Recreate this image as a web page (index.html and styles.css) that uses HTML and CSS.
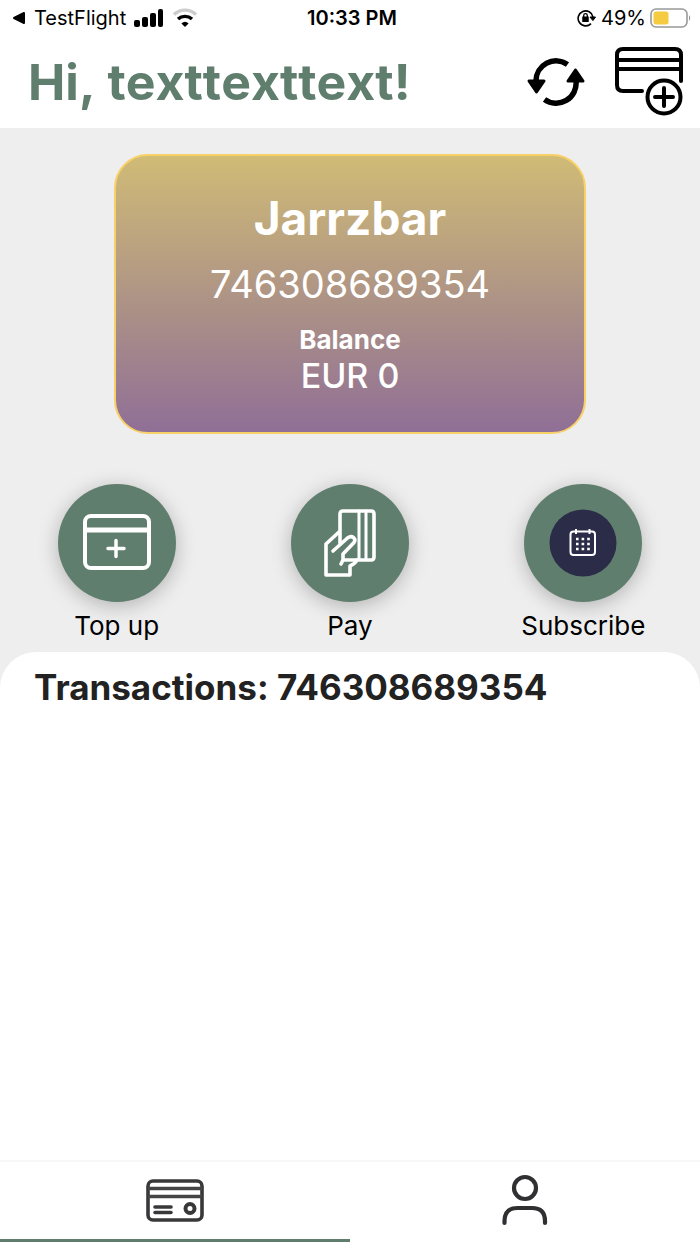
FILE: index.html
```
<!DOCTYPE html>
<html lang="en">
<head>
    <meta charset="utf-8">
    <meta name="viewport" content="width=device-width, initial-scale=1">
    <link rel="stylesheet" href="styles.css">
    <title>Wallet</title>
</head>
<body>
    <div class="status">
        <div class="status-left">
            <svg width="14" height="14" viewBox="0 0 14 14"><path d="M12 2v10L2 7z" stroke="#000" stroke-width="2" stroke-linejoin="round"/></svg>
            <span class="carrier">TestFlight</span>
            <svg width="30" height="20" viewBox="0 0 30 20"><rect x="0" y="12" width="6" height="7" rx="2"/><rect x="8" y="9" width="6" height="10" rx="2"/><rect x="16" y="5" width="6" height="14" rx="2"/><rect x="24" y="1" width="5" height="18" rx="2"/></svg>
            <svg width="26" height="20" viewBox="0 0 26 20" fill="none" stroke-width="3.4"><path d="M2 6.500a16 16 0 0 1 22 0" stroke="#ccc"/><path d="M6 11a10.500 10.500 0 0 1 14 0" stroke="#000"/><path d="M13 19l-3.600-3.600a5.500 5.500 0 0 1 7.200 0z" fill="#000"/></svg>
        </div>
        <div class="time">10:33 PM</div>
        <div class="status-right">
            <svg width="20" height="18" viewBox="0 0 20 18" fill="none" stroke="#000" stroke-width="1.6"><path d="M14 14.600A7.500 7.500 0 1 1 16 8"/><path d="M13 8h5.500l-2.600 3.600z" fill="#000" stroke-width="1"/><rect x="5.800" y="8" width="5.400" height="4.500" fill="#000" stroke-width="1"/><path d="M6.700 8V6.500a1.800 1.800 0 0 1 3.600 0V8" stroke-width="1.3"/></svg>
            <span>49%</span>
            <svg width="42" height="20" viewBox="0 0 42 20"><rect x="1" y="1" width="36" height="18" rx="5" fill="#fff" stroke="#999" stroke-width="1.6"/><rect x="3.500" y="3.500" width="15" height="13" rx="2.500" fill="#f5cb42"/><path d="M39 7q2.500 3 0 6z" fill="#999"/></svg>
        </div>
    </div>
    <header class="header">
        <h1>Hi, texttexttext!</h1>
        <div class="tools">
            <button class="icon-button" aria-label="Refresh">
                <svg width="60" height="48" viewBox="0 0 60 48"><g fill="none" stroke="#000" stroke-width="5.5"><path d="M41.500 6.500A20 20 0 0 0 10 23"/><path d="M18.500 41.500A20 20 0 0 0 50 23"/></g><g stroke="#000" stroke-width="3" stroke-linejoin="round"><path d="M3 23h15l-7.500 11z"/><path d="M42 23h15L49.500 12z"/></g></svg>
            </button>
            <button class="icon-button" aria-label="Add card">
                <svg width="70" height="70" viewBox="0 0 70 70" fill="none" stroke="#000" stroke-width="4" stroke-linecap="round"><path d="M28 44H9q-6 0-6-6V8q0-6 6-6h52q6 0 6 6v26"/><path d="M4 13h62M4 22h62"/><circle cx="50" cy="50" r="16.500"/><path d="M41 50h18M50 41v18"/></svg>
            </button>
        </div>
    </header>
    <main class="main">
        <section class="overview">
            <div class="card">
                <h2>Jarrzbar</h2>
                <div class="number">746308689354</div>
                <div class="label">Balance</div>
                <div class="balance">EUR 0</div>
            </div>
            <div class="actions">
                <button class="action">
                    <span class="circle">
                        <svg width="68" height="68" viewBox="0 0 68 68" fill="none" stroke="#fff" stroke-width="4" stroke-linecap="round"><rect x="2" y="7" width="64" height="52" rx="6"/><path d="M3 21h62" stroke-width="5"/><path d="M25 39.500h16M33 31.500v16" stroke-width="3.5"/></svg>
                    </span>
                    <span>Top up</span>
                </button>
                <button class="action">
                    <span class="circle">
                        <svg width="68" height="68" viewBox="0 0 68 68" fill="none" stroke="#fff" stroke-width="3.6" stroke-linecap="round" stroke-linejoin="round"><path d="M24 34V5q0-3 3-3h28q3 0 3 3v43q0 3-3 3H28"/><path d="M43 2v48M50 2v48" stroke-width="3"/><path d="M23 23L10 35v31h24v-9q5-2 7-6"/><path d="M17 42l14.500-13c5-3.500 9 1 6.500 4.500L27 45v6l-2 4"/></svg>
                    </span>
                    <span>Pay</span>
                </button>
                <button class="action">
                    <span class="circle">
                        <svg width="68" height="68" viewBox="0 0 68 68" fill="none" stroke="#fff" stroke-width="2"><circle cx="34" cy="34" r="33.500" fill="#2b2c48" stroke="none"/><rect x="21.500" y="22.500" width="24.500" height="23.500" rx="3"/><path d="M27 20v5M40.500 20v5"/><path d="M27 30h15M27 35h15M27 40h15" stroke-width="2.4" stroke-dasharray="2.6 3"/></svg>
                    </span>
                    <span>Subscribe</span>
                </button>
            </div>
        </section>
        <section class="transactions">
            <h3>Transactions: 746308689354</h3>
        </section>
    </main>
    <nav class="nav">
        <a class="tab active" href="#cards" aria-label="Cards">
            <svg width="60" height="46" viewBox="0 0 60 46" fill="none" stroke="#38383a" stroke-width="3.6"><rect x="3" y="3" width="54" height="39" rx="5"/><path d="M3 10.500h54M3 18.500h54" stroke="#444"/><path d="M10 29h16M10 34.500h16" stroke-linecap="round"/><circle cx="45" cy="30.500" r="4.500" stroke-width="4"/></svg>
        </a>
        <a class="tab" href="#profile" aria-label="Profile">
            <svg width="50" height="54" viewBox="0 0 50 54" fill="none" stroke="#303032" stroke-width="4.2" stroke-linecap="round"><circle cx="25" cy="14" r="11"/><path d="M4.500 49v-2q0-13 13-13h14.500q13 0 13 13v2"/></svg>
        </a>
    </nav>
</body>
</html>
```
FILE: styles.css
```
* { margin: 0; padding: 0; box-sizing: border-box; }
body { min-height: 100vh; display: flex; flex-direction: column; background: #fff; color: #000; font-family: Inter, "Liberation Sans", sans-serif; }
svg { display: block; flex: none; }
button { border: none; background: none; font: inherit; color: inherit; cursor: pointer; }

.status { height: 36px; padding: 0 8px 0 12px; display: grid; grid-template-columns: 1fr auto 1fr; align-items: center; font-size: 20px; }
.status-left, .status-right { display: flex; align-items: center; gap: 8px; }
.status-right { justify-content: flex-end; gap: 4px; }
.time { font-weight: 600; }

.header { height: 92px; padding: 0 16px 0 28px; display: flex; align-items: center; justify-content: space-between; }
.header h1 { color: #607e6e; font-size: 50px; line-height: 56px; font-weight: 700; font-kerning: none; }
.tools { display: flex; align-items: center; gap: 28px; }

.main { flex: 1; display: flex; flex-direction: column; background: #eee; }
.overview { padding: 26px 0 10px; }
.card { width: 100%; max-width: 472px; margin: 0 auto; padding: 34px 16px 36px; display: flex; flex-direction: column; align-items: center; color: #fff; border: 2px solid #f7d068; border-radius: 34px; background: linear-gradient(#d0bb76, #af9585 50%, #906f96); }
.card h2 { font-size: 46px; line-height: 56px; font-weight: 700; }
.number { padding: 14px 0 8px; font-size: 38px; line-height: 48px; }
.label { margin-top: 8px; font-size: 26px; line-height: 32px; font-weight: 700; }
.balance { font-size: 34px; line-height: 40px; font-weight: 500; }

.actions { margin-top: 50px; display: grid; grid-template-columns: repeat(3, 1fr); }
.action { display: flex; flex-direction: column; align-items: center; gap: 8px; font-size: 26px; line-height: 32px; }
.circle { width: 118px; height: 118px; display: flex; align-items: center; justify-content: center; border-radius: 50%; background: #607e6e; box-shadow: 0 4px 20px rgba(0, 0, 0, 0.25); }

.transactions { flex: 1; padding: 14px 34px; border-radius: 36px 36px 0 0; background: #fff; }
.transactions h3 { color: #222; font-size: 35px; line-height: 42px; font-weight: 700; }

.nav { height: 84px; display: grid; grid-template-columns: 1fr 1fr; border-top: 2px solid #f7f7f7; padding-bottom: 2px; }
.tab { display: flex; align-items: center; justify-content: center; border-bottom: 3px solid transparent; }
.tab.active { border-color: #607e6e; }
```
